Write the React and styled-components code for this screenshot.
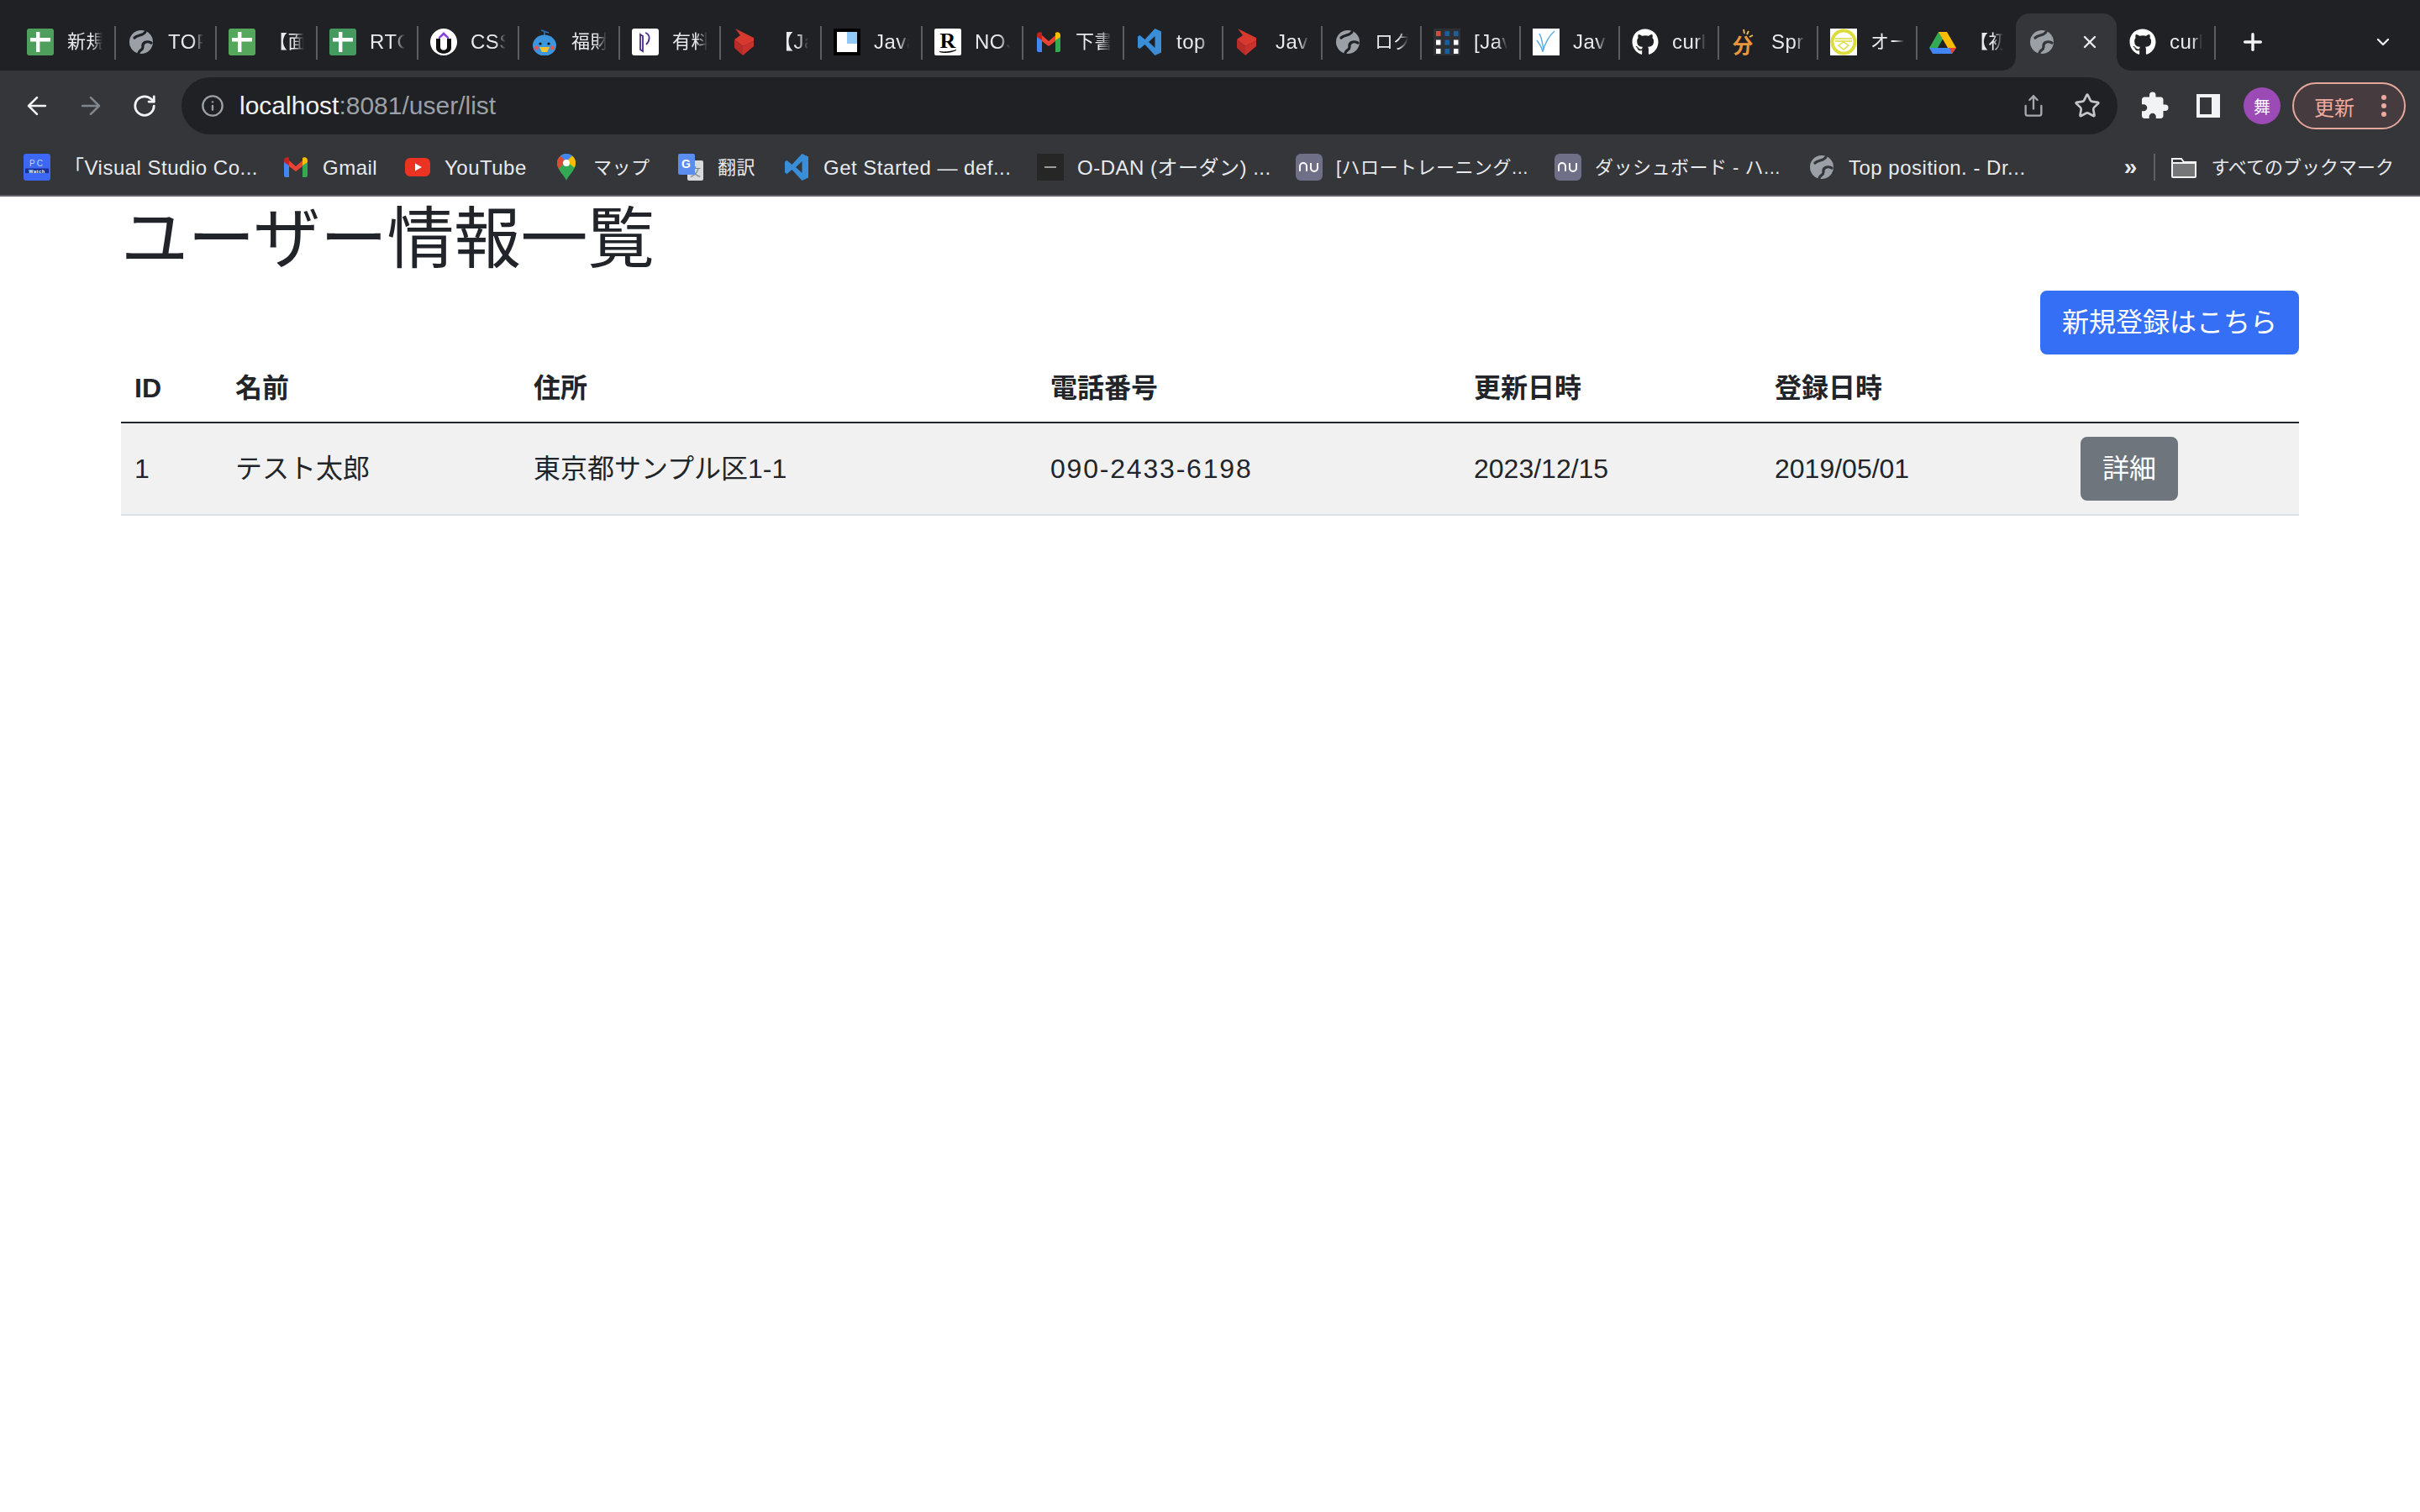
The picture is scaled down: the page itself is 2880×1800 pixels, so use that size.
import React from "react";
import styled, { createGlobalStyle } from "styled-components";
import { ArrowLeft, ArrowRight, RotateCw, Info, Share, Star, Plus, ChevronDown, X } from "lucide-react";
import { MdExtension } from "react-icons/md";
import { FaGithub } from "react-icons/fa";

const FONT = `"Liberation Sans", "Noto Sans CJK JP", sans-serif`;

const GlobalStyle = createGlobalStyle`
  html, body { margin: 0; padding: 0; background: #fff; }
  body { font-family: ${FONT}; color: #212529; }
`;

const Strip = styled.div`
  height: 84px;
  box-sizing: border-box;
  padding: 16px 32px 0 17px;
  display: flex;
  background: #202124;
`;

const Tab = styled.div`
  width: ${(p) => p.$w}px;
  flex: none;
  box-sizing: border-box;
  padding: 0 ${(p) => (p.$active ? 20 : 15)}px 0 15px;
  display: flex;
  align-items: center;
  gap: 16px;
  position: relative;
  background: ${(p) => (p.$active ? "#35363a" : "transparent")};
  border-radius: ${(p) => (p.$active ? "16px 16px 0 0" : "0")};
  &::after {
    content: "";
    display: ${(p) => (p.$noSep ? "none" : "block")};
    position: absolute;
    right: -1px;
    top: 15px;
    width: 2px;
    height: 40px;
    background: #5c5d60;
  }
`;

const Flare = styled.span`
  position: absolute;
  bottom: 0;
  ${(p) => (p.$right ? "right: -16px;" : "left: -16px;")}
  width: 16px;
  height: 16px;
  background: radial-gradient(
    circle at ${(p) => (p.$right ? "100% 0" : "0 0")},
    transparent 15.5px,
    #35363a 16px
  );
`;

const TabTitle = styled.span`
  flex: 1;
  min-width: 0;
  overflow: hidden;
  white-space: nowrap;
  font-size: ${(p) => (p.$cjk ? 22 : 24)}px;
  letter-spacing: 0.5px;
  line-height: 32px;
  color: #e8eaed;
  -webkit-mask-image: linear-gradient(to right, #000 70%, transparent 100%);
  mask-image: linear-gradient(to right, #000 70%, transparent 100%);
`;

const CloseBox = styled.span`
  margin-left: auto;
  display: flex;
  color: #e8eaed;
`;

const NewTab = styled.span`
  margin-left: 29px;
  display: flex;
  align-items: center;
  color: #f1f3f4;
`;

const TabMenu = styled.span`
  margin-left: auto;
  display: flex;
  align-items: center;
  color: #e8eaed;
`;

const Toolbar = styled.div`
  height: 84px;
  box-sizing: border-box;
  padding: 8px 17px 8px 12px;
  display: flex;
  align-items: center;
  background: #35363a;
`;

const IconButton = styled.span`
  width: 64px;
  height: 68px;
  flex: none;
  display: flex;
  align-items: center;
  justify-content: center;
  color: ${(p) => p.$color || "#f1f3f4"};
`;

const Omnibox = styled.div`
  flex: 1;
  height: 68px;
  margin: 0 12px;
  padding: 0 4px 0 23px;
  display: flex;
  align-items: center;
  border-radius: 34px;
  background: #202124;
`;

const UrlText = styled.span`
  margin-left: 18px;
  margin-right: auto;
  font-size: 30px;
  color: #f1f3f4;
  & span { color: #9aa0a6; }
`;

const Avatar = styled.span`
  width: 44px;
  height: 44px;
  border-radius: 50%;
  background: #9c4ab5;
  color: #fff;
  font-size: 20px;
  display: flex;
  align-items: center;
  justify-content: center;
`;

const UpdatePill = styled.div`
  width: 135px;
  height: 56px;
  margin-left: 4px;
  box-sizing: border-box;
  padding: 0 21px 0 24px;
  flex: none;
  display: flex;
  align-items: center;
  justify-content: space-between;
  border: 2px solid #e5a79c;
  border-radius: 28px;
  background: #463c3f;
  color: #f0a99e;
  font-size: 24px;
`;

const Dots = styled.span`
  display: flex;
  flex-direction: column;
  gap: 4px;
  & i {
    width: 6px;
    height: 6px;
    border-radius: 50%;
    background: #f0a99e;
  }
`;

const BookmarkBar = styled.div`
  height: 66px;
  box-sizing: border-box;
  padding: 0 31px 2px 28px;
  display: flex;
  align-items: center;
  background: #35363a;
  border-bottom: 2px solid #5f6063;
`;

const Bookmark = styled.div`
  width: ${(p) => (p.$w ? `${p.$w}px` : "auto")};
  flex: none;
  display: flex;
  align-items: center;
  gap: 16px;
`;

const BookmarkLabel = styled.span`
  padding-top: 2px;
  font-size: ${(p) => (p.$cjk ? 22 : 24)}px;
  letter-spacing: ${(p) => (p.$tight ? 0 : 0.5)}px;
  line-height: 32px;
  white-space: nowrap;
  color: #e8eaed;
`;

const Overflow = styled.span`
  margin-left: auto;
  font-size: 28px;
  font-weight: 700;
  color: #e8eaed;
`;

const BarDivider = styled.span`
  width: 2px;
  height: 32px;
  margin: 0 18px 0 20px;
  background: #5f6063;
`;

const Page = styled.main`
  padding: 0 144px;
`;

const Heading = styled.h1`
  margin: 0 0 13px;
  padding-top: 3px;
  font-size: 80px;
  font-weight: 400;
  line-height: 96px;
  letter-spacing: -0.5px;
`;

const Actions = styled.div`
  display: flex;
  justify-content: ${(p) => (p.$start ? "flex-start" : "flex-end")};
`;

const Button = styled.a`
  display: block;
  box-sizing: border-box;
  height: 76px;
  padding: 0 ${(p) => p.$pad}px;
  font-size: 32px;
  line-height: 72px;
  border: 2px solid ${(p) => p.$bg};
  border-radius: 8px;
  background: ${(p) => p.$bg};
  color: #fff;
`;

const Table = styled.table`
  width: 100%;
  table-layout: fixed;
  border-collapse: separate;
  border-spacing: 0;
  font-size: 32px;
  line-height: 48px;
`;

const Th = styled.th`
  padding: 16px;
  text-align: left;
  font-weight: 700;
  border-bottom: 2px solid #212529;
`;

const Td = styled.td`
  padding: 16px;
  vertical-align: middle;
  background: #f1f1f1;
  border-bottom: 2px solid #dee2e6;
  letter-spacing: ${(p) => p.$ls || 0}px;
`;

// favicons, all on a 32 box
const Svg = ({ children }) => (
  <svg width="32" height="32" viewBox="0 0 32 32" style={{ flex: "none", display: "block" }}>
    {children}
  </svg>
);

const Sheets = ({ color = "#4f9f5c" }) => (
  <Svg>
    <rect width="32" height="32" rx="3" fill={color} />
    <path d="M11 4h4.400v7H28v4.400H15.400V28H11V15.400H4V11h7z" fill="#fff" />
  </Svg>
);

const Globe = ({ bg = "#202124" }) => (
  <Svg>
    <circle cx="16" cy="16" r="14" fill="#9aa0a6" />
    <path d="M21 4C18 9 12 7 8 11" stroke={bg} strokeWidth="3.200" strokeLinecap="round" fill="none" />
    <path d="M28 17C22 14 17 17 18 22C18 26 14 25 13 29" stroke={bg} strokeWidth="3.200" strokeLinecap="round" fill="none" />
  </Svg>
);

const UIcon = () => (
  <Svg>
    <circle cx="16" cy="16" r="16" fill="#fff" />
    <path d="M10 10l6-6 6 6v3l-6-5-6 5z" fill="#8a3fe0" />
    <path d="M7 12h5v10c0 5 8 5 8 0V12h5v11c0 9-18 9-18 0z" fill="#111" />
  </Svg>
);

const Bird = () => (
  <Svg>
    <path d="M16 8V3M12 2l9 3" stroke="#2f6fb2" strokeWidth="1.600" fill="none" />
    <ellipse cx="16" cy="20" rx="14" ry="12.500" fill="#3b96dd" />
    <circle cx="11" cy="18" r="1.600" fill="#111" />
    <circle cx="21" cy="18" r="1.600" fill="#111" />
    <circle cx="6.500" cy="23" r="2.400" fill="#e8574f" />
    <circle cx="25.500" cy="23" r="2.400" fill="#e8574f" />
    <path d="M10 22h12l-3 6h-6z" fill="#f3c331" />
  </Svg>
);

const PIcon = () => (
  <Svg>
    <rect width="32" height="32" rx="3" fill="#fff" />
    <path d="M10 7v18l3 2V9zM16 5c6 2 6 9 1 14" stroke="#4a2a86" strokeWidth="1.800" fill="none" />
  </Svg>
);

const Ribbon = () => (
  <Svg>
    <path d="M3 0L25 11V15L12 21 2 13 9 8z" fill="#d8392f" />
    <path d="M2 13L12 21V32L2 23z" fill="#b72c28" />
    <path d="M12 21L25 15V21L12 32z" fill="#c9322c" />
  </Svg>
);

const LIcon = () => (
  <Svg>
    <rect width="32" height="32" fill="#000" />
    <rect x="4" y="4" width="24" height="24" fill="#fff" />
    <rect x="16" y="4" width="12" height="14" fill="#90c8f8" />
  </Svg>
);

const RIcon = () => (
  <Svg>
    <rect width="32" height="32" rx="2" fill="#fff" />
    <text x="16" y="23" textAnchor="middle" fontSize="26" fontWeight="700" fontFamily="Liberation Serif, serif" fill="#000">R</text>
    <path d="M6 27c7 1 14 0 20-2v1c-6 3-14 4-20 2z" fill="#000" />
  </Svg>
);

const Gmail = () => (
  <Svg>
    <path d="M2 8v18c0 1 1 2 2 2h4V13z" fill="#4285f4" />
    <path d="M30 8v18c0 1-1 2-2 2h-4V13z" fill="#34a853" />
    <path d="M8 8l8 7 8-7v7l-8 6-8-6z" fill="#ea4335" />
    <path d="M2 8c0-3 3-5 6-3v9l-6-4z" fill="#c5221f" />
    <path d="M30 8c0-3-3-5-6-3v9l6-4z" fill="#fbbc04" />
  </Svg>
);

const VsCode = () => (
  <Svg>
    <path fillRule="evenodd" d="M22.500 0L30 3.500V28.500L22.500 32 10.500 19 4.500 24 2 22.500V9.500L4.500 8l6 5zM22.500 9L15 16l7.500 7z" fill="#3a8ed8" />
  </Svg>
);

const GridIcon = () => {
  const colors = ["#d94a3d", "#1f5f99", "#1f5f99", "#fff", "#1f5f99", "#fff", "#fff", "#1f5f99", "#fff"];
  return (
    <Svg>
      <rect width="32" height="32" fill="#2e3033" />
      {colors.map((c, i) => (
        <rect key={i} x={3 + (i % 3) * 10.5} y={3 + Math.floor(i / 3) * 10.5} width="5.500" height="6" fill={c} />
      ))}
    </Svg>
  );
};

const VIcon = () => (
  <Svg>
    <rect width="32" height="32" fill="#fff" />
    <path d="M8 6c3 6 4 12 5 20M26 3c-7 6-11 14-14 24M5 14c3 4 6 8 7 14" stroke="#58a9e0" strokeWidth="1.400" fill="none" />
  </Svg>
);

const Github = () => <FaGithub size={32} color="#fff" style={{ flex: "none" }} />;

const BunIcon = () => (
  <Svg>
    <path d="M15 1l1 5M21 3l-2 4M26 8l-4 2" stroke="#f2c14e" strokeWidth="1.800" />
    <text x="14" y="29" textAnchor="middle" fontSize="24" fontWeight="700" fontFamily="Noto Sans CJK JP, sans-serif" fill="#ea963c">分</text>
  </Svg>
);

const RingIcon = () => (
  <Svg>
    <rect width="32" height="32" fill="#fff" />
    <circle cx="16" cy="16" r="13.500" fill="none" stroke="#dcdc3c" strokeWidth="4" />
    <path d="M6 12h20M6 15h20M10 20l6-4 6 4-6 5z" stroke="#dcdc3c" strokeWidth="1.400" fill="none" />
  </Svg>
);

const Drive = () => (
  <Svg>
    <path d="M11 3h10L10 22H0z" fill="#34a853" transform="translate(0 1)" />
    <path d="M11 4h10l11 19H22z" fill="#fbbc04" />
    <path d="M6 23h26l-5 7H4l-4-7z" fill="#4285f4" />
    <path d="M27 30l5-7h-8z" fill="#ea4335" />
  </Svg>
);

const PcWatch = () => (
  <Svg>
    <rect width="32" height="32" rx="3" fill="#3d67f5" />
    <text x="16" y="15" textAnchor="middle" fontSize="10" fontFamily="Liberation Sans, sans-serif" fill="#c9d4ff" letterSpacing="2">PC</text>
    <rect x="2" y="17.500" width="28" height="5.500" fill="#1b2f97" />
    <text x="16" y="22.500" textAnchor="middle" fontSize="5.500" fontWeight="700" fontFamily="Liberation Sans, sans-serif" fill="#fff" letterSpacing="0.600">Watch</text>
  </Svg>
);

const YouTube = () => (
  <Svg>
    <rect x="1" y="5" width="30" height="22" rx="6" fill="#ea3323" />
    <path d="M13 11.500l8 4.500-8 4.500z" fill="#fff" />
  </Svg>
);

const MapsPin = () => (
  <Svg>
    <path d="M16 32c-2-6-11-12-11-21a11 11 0 0 1 22 0c0 9-9 15-11 21z" fill="#34a853" />
    <path d="M5 11a11 11 0 0 1 5-9l6 7-9 9c-1-2-2-4-2-7z" fill="#ea4335" opacity="0.900" />
    <path d="M9 2.500a11 11 0 0 1 14 0l-7 7z" fill="#4285f4" />
    <path d="M23 2.500a11 11 0 0 1 4 8.500c0 2-.5 4-1.500 5.500L16 9z" fill="#fbbc04" />
    <circle cx="16" cy="11" r="4" fill="#fff" />
  </Svg>
);

const Translate = () => (
  <Svg>
    <rect x="12" y="8" width="19" height="24" rx="2" fill="#d9dadc" />
    <text x="21.500" y="26" textAnchor="middle" fontSize="13" fontFamily="Noto Sans CJK JP, sans-serif" fill="#7b8088">文</text>
    <rect x="1" y="0" width="20" height="25" rx="2" fill="#5b8def" />
    <text x="10.500" y="17" textAnchor="middle" fontSize="14" fontWeight="700" fontFamily="Liberation Sans, sans-serif" fill="#fff">G</text>
  </Svg>
);

const Odan = () => (
  <Svg>
    <rect width="32" height="32" fill="#262626" />
    <rect x="9" y="15" width="14" height="2" fill="#9c9c9c" />
  </Svg>
);

const NuIcon = () => (
  <Svg>
    <rect width="32" height="32" rx="6" fill="#6f6f87" />
    <path d="M5 21v-6a4 4 0 0 1 8 0v6M18 11v6a4 4 0 0 0 8 0v-6" stroke="#fff" strokeWidth="2" fill="none" />
  </Svg>
);

const Folder = () => (
  <Svg>
    <path d="M2 11h28v16H2z" fill="#757678" />
    <path d="M2 6h11l3 4h14v17a1 1 0 0 1-1 1H3a1 1 0 0 1-1-1zM2 11h28" stroke="#f1f3f4" strokeWidth="2" fill="none" />
  </Svg>
);

const SidePanel = () => (
  <svg width="28" height="28" viewBox="0 0 28 28">
    <path fillRule="evenodd" d="M0 0h28v28H0zM4 4v20h14V4z" fill="#f1f3f4" />
  </svg>
);

const tabs = [
  { icon: <Sheets />, title: "新規", cjk: true, w: 120 },
  { icon: <Globe />, title: "TOP", w: 120 },
  { icon: <Sheets color="#55a75c" />, title: "【面", cjk: true, w: 120 },
  { icon: <Sheets color="#459a60" />, title: "RTC", w: 120 },
  { icon: <UIcon />, title: "CSS", w: 120 },
  { icon: <Bird />, title: "福財", cjk: true, w: 120 },
  { icon: <PIcon />, title: "有料", cjk: true, w: 120 },
  { icon: <Ribbon />, title: "【Ja", w: 120 },
  { icon: <LIcon />, title: "Java", w: 120 },
  { icon: <RIcon />, title: "NO、", w: 120 },
  { icon: <Gmail />, title: "下書", cjk: true, w: 120 },
  { icon: <VsCode />, title: "top", w: 118 },
  { icon: <Ribbon />, title: "Jav", w: 118 },
  { icon: <Globe />, title: "ログ", cjk: true, w: 118 },
  { icon: <GridIcon />, title: "[Jav", w: 118 },
  { icon: <VIcon />, title: "Jav", w: 118 },
  { icon: <Github />, title: "curl", w: 118 },
  { icon: <BunIcon />, title: "Spr", w: 118 },
  { icon: <RingIcon />, title: "オー", cjk: true, w: 118 },
  { icon: <Drive />, title: "【初", cjk: true, w: 118, noSep: true },
];

const bookmarks = [
  { icon: <PcWatch />, label: "「Visual Studio Co...", w: 308 },
  { icon: <Gmail />, label: "Gmail", w: 145 },
  { icon: <YouTube />, label: "YouTube", w: 177 },
  { icon: <MapsPin />, label: "マップ", cjk: true, w: 148 },
  { icon: <Translate />, label: "翻訳", cjk: true, w: 126 },
  { icon: <VsCode />, label: "Get Started — def...", w: 302 },
  { icon: <Odan />, label: "O-DAN (オーダン) ...", w: 308 },
  { icon: <NuIcon />, label: "[ハロートレーニング...", cjk: true, w: 308 },
  { icon: <NuIcon />, label: "ダッシュボード - ハ...", cjk: true, w: 302 },
  { icon: <Globe bg="#35363a" />, label: "Top position. - Dr..." },
];

const columns = [
  { title: "ID", w: 120 },
  { title: "名前", w: 355 },
  { title: "住所", w: 615 },
  { title: "電話番号", w: 504 },
  { title: "更新日時", w: 358 },
  { title: "登録日時", w: 364 },
  { title: "", w: 276 },
];

function App() {
  return (
    <>
      <GlobalStyle />
      <Strip>
        {tabs.map((t, i) => (
          <Tab key={i} $w={t.w} $noSep={t.noSep}>
            {t.icon}
            <TabTitle $cjk={t.cjk}>{t.title}</TabTitle>
          </Tab>
        ))}
        <Tab $w={120} $active $noSep>
          <Flare />
          <Globe bg="#35363a" />
          <CloseBox>
            <X size={24} strokeWidth={2.4} />
          </CloseBox>
          <Flare $right />
        </Tab>
        <Tab $w={117}>
          <Github />
          <TabTitle>curl</TabTitle>
        </Tab>
        <NewTab>
          <Plus size={32} strokeWidth={2.6} />
        </NewTab>
        <TabMenu>
          <ChevronDown size={24} strokeWidth={2.4} />
        </TabMenu>
      </Strip>

      <Toolbar>
        <IconButton><ArrowLeft size={34} strokeWidth={1.8} /></IconButton>
        <IconButton $color="#80868b"><ArrowRight size={34} strokeWidth={1.8} /></IconButton>
        <IconButton><RotateCw size={30} strokeWidth={2.2} /></IconButton>
        <Omnibox>
          <Info size={28} strokeWidth={2} color="#9aa0a6" />
          <UrlText>localhost<span>:8081/user/list</span></UrlText>
          <IconButton $color="#a6aaae"><Share size={28} strokeWidth={2} /></IconButton>
          <IconButton $color="#c4c7ca"><Star size={32} strokeWidth={2} /></IconButton>
        </Omnibox>
        <IconButton><MdExtension size={36} /></IconButton>
        <IconButton><SidePanel /></IconButton>
        <IconButton><Avatar>舞</Avatar></IconButton>
        <UpdatePill>
          更新
          <Dots><i /><i /><i /></Dots>
        </UpdatePill>
      </Toolbar>

      <BookmarkBar>
        {bookmarks.map((b, i) => (
          <Bookmark key={i} $w={b.w}>
            {b.icon}
            <BookmarkLabel $cjk={b.cjk}>{b.label}</BookmarkLabel>
          </Bookmark>
        ))}
        <Overflow>»</Overflow>
        <BarDivider />
        <Bookmark>
          <Folder />
          <BookmarkLabel $cjk $tight>すべてのブックマーク</BookmarkLabel>
        </Bookmark>
      </BookmarkBar>

      <Page>
        <Heading>ユーザー情報一覧</Heading>
        <Actions>
          <Button $bg="#356ff6" $pad={24}>新規登録はこちら</Button>
        </Actions>
        <Table>
          <colgroup>
            {columns.map((c, i) => <col key={i} width={c.w} />)}
          </colgroup>
          <thead>
            <tr>
              {columns.map((c, i) => <Th key={i}>{c.title}</Th>)}
            </tr>
          </thead>
          <tbody>
            <tr>
              <Td>1</Td>
              <Td>テスト太郎</Td>
              <Td>東京都サンプル区1-1</Td>
              <Td $ls={1.8}>090-2433-6198</Td>
              <Td>2023/12/15</Td>
              <Td>2019/05/01</Td>
              <Td>
                <Actions $start>
                  <Button $bg="#6f757d" $pad={24}>詳細</Button>
                </Actions>
              </Td>
            </tr>
          </tbody>
        </Table>
      </Page>
    </>
  );
}

export default App;
